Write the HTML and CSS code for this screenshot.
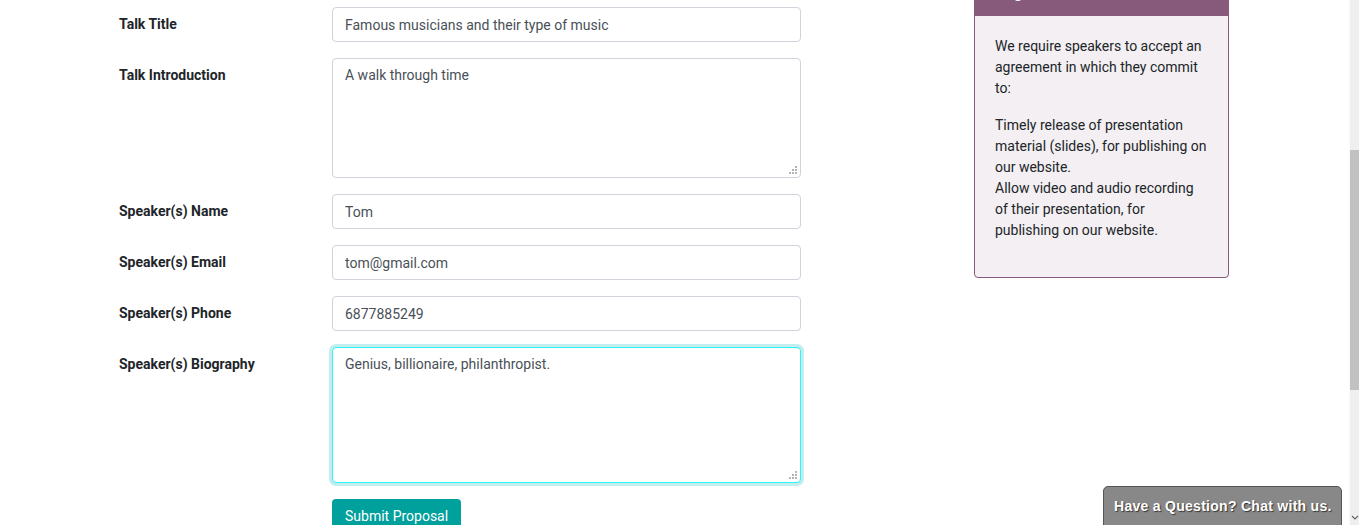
FILE: index.html
```html
<!DOCTYPE html>
<html lang="en">
  <head>
    <meta charset="UTF-8">
    <meta name="viewport" content="width=device-width, initial-scale=1.0">
    <title>Call for Proposals</title>
    <link rel="stylesheet" href="styles.css">
  </head>
<body>
  <div class="page">
    <form class="proposal" action="/event/track/proposal" method="post">
      <div class="row">
        <label for="title">Talk Title</label>
        <input type="text" id="title" name="title" value="Famous musicians and their type of music">
      </div>
      <div class="row">
        <label for="intro">Talk Introduction</label>
        <div class="area">
          <textarea id="intro" name="intro" class="intro">A walk through time</textarea>
          <svg class="grip" width="8" height="8" viewBox="0 0 8 8"><rect x="6" y="0" width="2" height="2"/><rect x="3" y="3" width="2" height="2"/><rect x="6" y="3" width="2" height="2"/><rect x="0" y="6" width="2" height="2"/><rect x="3" y="6" width="2" height="2"/><rect x="6" y="6" width="2" height="2"/></svg>
        </div>
      </div>
      <div class="row">
        <label for="name">Speaker(s) Name</label>
        <input type="text" id="name" name="name" value="Tom">
      </div>
      <div class="row">
        <label for="email">Speaker(s) Email</label>
        <input type="text" id="email" name="email" value="tom@gmail.com">
      </div>
      <div class="row">
        <label for="phone">Speaker(s) Phone</label>
        <input type="text" id="phone" name="phone" value="6877885249">
      </div>
      <div class="row">
        <label for="bio">Speaker(s) Biography</label>
        <div class="area">
          <textarea id="bio" name="bio" class="bio focused">Genius, billionaire, philanthropist.</textarea>
          <svg class="grip" width="8" height="8" viewBox="0 0 8 8"><rect x="6" y="0" width="2" height="2"/><rect x="3" y="3" width="2" height="2"/><rect x="6" y="3" width="2" height="2"/><rect x="0" y="6" width="2" height="2"/><rect x="3" y="6" width="2" height="2"/><rect x="6" y="6" width="2" height="2"/></svg>
        </div>
      </div>
      <div class="row">
        <span class="spacer"></span>
        <button type="submit" class="submit">Submit Proposal</button>
      </div>
    </form>

    <aside class="card">
      <div class="card-head">Agreement</div>
      <div class="card-body">
        <p>We require speakers to accept an agreement in which they commit to:</p>
        <p>Timely release of presentation material (slides), for publishing on our website.<br>Allow video and audio recording of their presentation, for publishing on our website.</p>
      </div>
    </aside>
  </div>

  <div class="chat">Have a Question? Chat with us.</div>

  <div class="scrollbar">
    <div class="thumb"></div>
    <svg class="arrow" width="8" height="5" viewBox="0 0 8 5"><path d="M1 1 L4 4 L7 1" fill="none" stroke="#666" stroke-width="1.2"/></svg>
  </div>
</body>
</html>
```

FILE: styles.css
```css
body {
  margin: 0;
  padding: 0;
  height: 525px;
  overflow: hidden;
  background: #fff;
  font-family: Roboto, 'Noto Sans', sans-serif;
  font-size: 14px;
  line-height: 21px;
  color: #212529;
}

.page {
  display: flex;
  align-items: flex-start;
  padding-left: 119px;
}

.proposal {
  width: 682px;
  padding-top: 7px;
}

.row {
  display: flex;
  margin-bottom: 16px;
}

.row label,
.spacer {
  width: 213px;
  flex: none;
  padding-top: 7px;
  font-weight: bold;
  color: #212529;
}

input,
textarea {
  width: 469px;
  height: 35px;
  padding: 6px 12px;
  margin: 0;
  border: 1px solid #ced4da;
  border-radius: 4px;
  box-sizing: border-box;
  font-family: Roboto, 'Noto Sans', sans-serif;
  font-size: 14px;
  line-height: 21px;
  color: #495057;
  background: #fff;
  outline: none;
  display: block;
}

textarea {
  resize: none;
}

.area {
  position: relative;
}

.intro {
  height: 120px;
}

.bio {
  height: 136px;
}

.focused {
  border-color: #2ef3f3;
  box-shadow: 0 0 0 3px #c2eef0;
}

.grip {
  position: absolute;
  right: 4px;
  bottom: 4px;
  fill: #b5b5b5;
}

.submit {
  background-color: #00A09D;
  color: white;
  border: none;
  border-radius: 4px;
  padding: 7px 13px;
  font-family: Roboto, 'Noto Sans', sans-serif;
  font-size: 14px;
  line-height: 21px;
  cursor: pointer;
}

.card {
  width: 255px;
  margin-left: 173px;
  margin-top: -30px;
  border: 1px solid #875A7B;
  border-radius: 4px;
  box-sizing: border-box;
  background: #f3eff2;
  overflow: hidden;
}

.card-head {
  background: #875A7B;
  color: #fff;
  font-size: 16px;
  font-weight: bold;
  line-height: 24px;
  padding: 10px 20px 11px 28px;
}

.card-body {
  padding: 20px 20px 20px 20px;
}

.card-body p {
  margin: 0 0 16px 0;
}

.chat {
  position: fixed;
  left: 1103px;
  top: 486px;
  width: 239px;
  height: 50px;
  box-sizing: border-box;
  padding: 9px 0 0 10px;
  background: #888;
  border: 1px solid #555;
  border-radius: 5px 5px 0 0;
  font-family: 'Liberation Sans', Arial, sans-serif;
  font-weight: bold;
  font-size: 14px;
  line-height: 20px;
  letter-spacing: 0.28px;
  color: #fff;
  text-shadow: 1px 1px 1px #333;
}

.scrollbar {
  position: fixed;
  left: 1349px;
  top: 0;
  width: 10px;
  height: 525px;
  background: #efefef;
  border-left: 1px solid #fafafa;
}

.thumb {
  position: absolute;
  top: 150px;
  left: 0;
  width: 10px;
  height: 240px;
  background: #c1c1c1;
}

.arrow {
  position: absolute;
  left: 1px;
  top: 515px;
}
```
